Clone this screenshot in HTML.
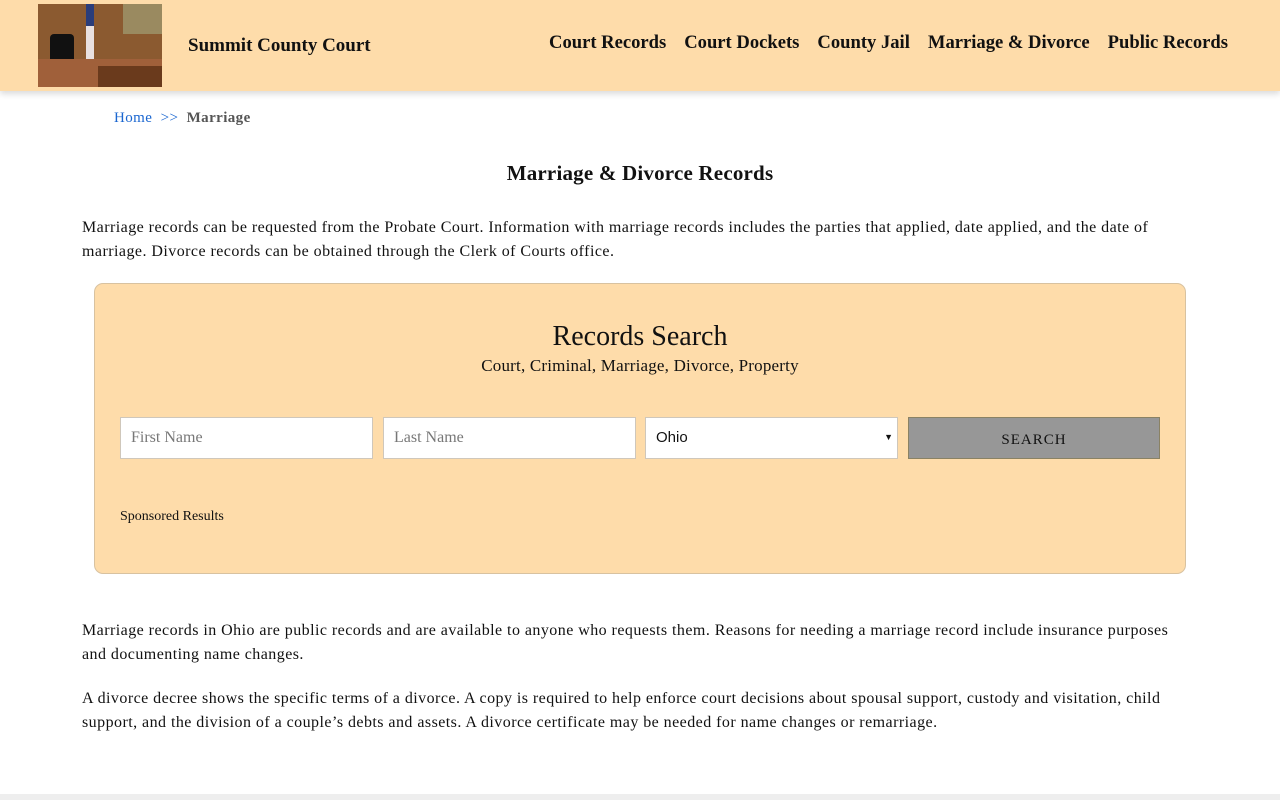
<!DOCTYPE html>
<html><head><meta charset="utf-8"><style>
body{margin:0;width:1280px;height:800px;overflow:hidden;background:#fff;font-family:"Liberation Serif",serif;color:#111;position:relative}
.hdr{height:91px;background:#fedcaa;box-shadow:0 3px 6px rgba(0,0,0,.15);position:relative}
.logo{position:absolute;left:38px;top:4px;width:124px;height:83px;background:#8b5a30;overflow:hidden}
.title{position:absolute;left:188px;top:35px;font-size:19px;font-weight:bold}
.nav{position:absolute;right:52px;top:32px;font-size:18.6px;font-weight:bold}
.nav span{margin-left:18px}
.bc{position:absolute;left:114px;top:110px;font-size:15px;letter-spacing:.4px}
.bc a{color:#1a66d0}
.bc b{color:#555}
h1{position:absolute;top:161px;left:0;width:1280px;text-align:center;font-size:21px;margin:0;letter-spacing:.2px}
p{position:absolute;left:82px;width:1110px;margin:0;font-size:16px;line-height:24px;letter-spacing:.45px}
.box{position:absolute;left:94px;top:283px;width:1090px;height:289px;background:#fedcaa;border:1px solid #d8c2a0;border-radius:9px}
.box .t{position:absolute;top:37px;width:100%;text-align:center;font-size:28px}
.box .s{position:absolute;top:72px;width:100%;text-align:center;font-size:17px;letter-spacing:.2px}
.in{position:absolute;top:133px;height:42px;background:#fff;border:1px solid #cfc7bb;box-sizing:border-box;font-size:16px;color:#777;padding:11px 10px;width:253px}
.btn{position:absolute;left:813px;top:133px;width:252px;height:42px;background:#979797;border:1px solid #8a8264;box-sizing:border-box;text-align:center;line-height:44px;letter-spacing:1px;font-size:15px}
.sp{position:absolute;left:25px;top:225px;font-size:14px}
.foot{position:absolute;top:794px;left:0;width:1280px;height:6px;background:#eee}
</style></head><body>
<div class="hdr">
<div class="logo"><svg width="124" height="83"><rect x="0" y="0" width="124" height="45" fill="#8b5a30"/><rect x="85" y="0" width="39" height="30" fill="#9a8a60"/><rect x="48" y="0" width="8" height="60" fill="#e8e0e0"/><rect x="48" y="0" width="8" height="22" fill="#2a3d7a"/><rect x="12" y="30" width="24" height="30" rx="4" fill="#111"/><rect x="0" y="55" width="124" height="28" fill="#a0603a"/><rect x="60" y="62" width="64" height="21" fill="#6a3a1c"/></svg></div>
<div class="title">Summit County Court</div>
<div class="nav"><span>Court Records</span><span>Court Dockets</span><span>County Jail</span><span>Marriage &amp; Divorce</span><span>Public Records</span></div>
</div>
<div class="bc"><a>Home</a> &nbsp;<a>&gt;&gt;</a>&nbsp; <b>Marriage</b></div>
<h1>Marriage &amp; Divorce Records</h1>
<p style="top:216px">Marriage records can be requested from the Probate Court. Information with marriage records includes the parties that applied, date applied, and the date of marriage. Divorce records can be obtained through the Clerk of Courts office.</p>
<div class="box">
<div class="t">Records Search</div>
<div class="s">Court, Criminal, Marriage, Divorce, Property</div>
<div class="in" style="left:25px">First Name</div>
<div class="in" style="left:288px">Last Name</div>
<div class="in" style="left:550px;color:#111;font-family:'Liberation Sans',sans-serif;font-size:15px;padding-top:11px">Ohio<span style="position:absolute;right:4px;top:14px;font-size:9px">&#9660;</span></div>
<div class="btn">SEARCH</div>
<div class="sp">Sponsored Results</div>
</div>
<p style="top:619px">Marriage records in Ohio are public records and are available to anyone who requests them. Reasons for needing a marriage record include insurance purposes and documenting name changes.</p>
<p style="top:687px">A divorce decree shows the specific terms of a divorce. A copy is required to help enforce court decisions about spousal support, custody and visitation, child support, and the division of a couple’s debts and assets. A divorce certificate may be needed for name changes or remarriage.</p>
<div class="foot"></div>
</body></html>
